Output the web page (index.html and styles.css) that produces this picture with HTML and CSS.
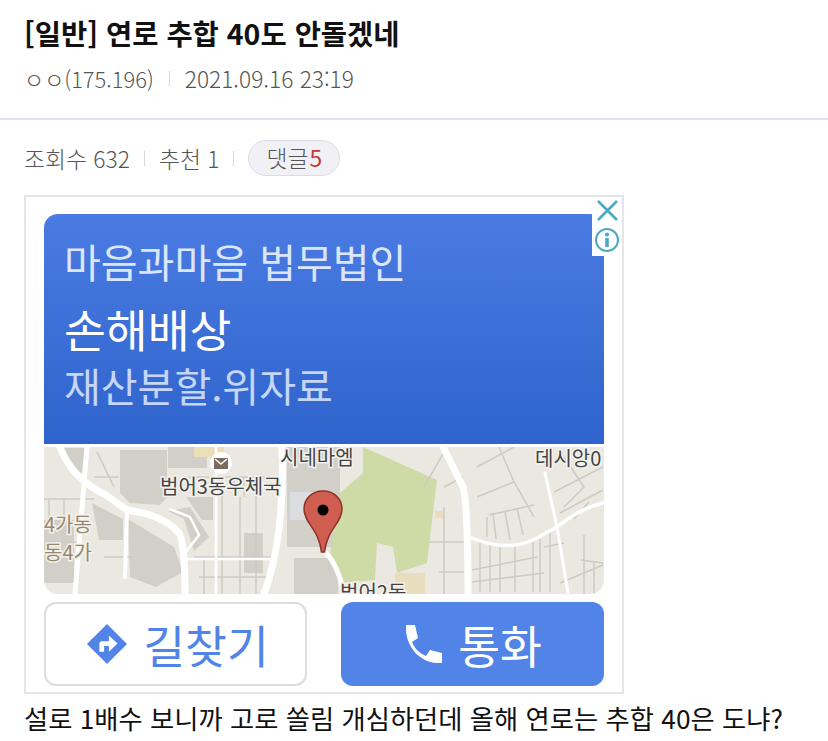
FILE: index.html
```html
<!DOCTYPE html>
<html lang="ko">
<head>
    <meta charset="UTF-8">
    <title>연로 추합 40도 안돌겠네</title>
    <link rel="stylesheet" href="styles.css">
</head>
<body>
    <header class="post-head">
        <h1>[일반] 연로 추합 40도 안돌겠네</h1>
        <div class="writer">
            <span class="writer-name">ㅇㅇ(175.196)</span>
            <i class="sep"></i>
            <span>2021.09.16 23:19</span>
        </div>
    </header>

    <div class="post-stats">
        <span>조회수 632</span>
        <i class="sep"></i>
        <span>추천 1</span>
        <i class="sep"></i>
        <span class="reply-pill">댓글<b>5</b></span>
    </div>

    <!-- Ad box -->
    <div class="ad">
        <div class="ad-badge">
            <svg width="26" height="26" viewBox="0 0 26 26">
                <path d="M4 3 L23 22 M23 3 L4 22" stroke="#4ea8c4" stroke-width="2.6" fill="none"/>
            </svg>
            <svg width="26" height="26" viewBox="0 0 26 26">
                <circle cx="13" cy="13" r="11" stroke="#4ea8c4" stroke-width="2" fill="none"/>
                <circle cx="13" cy="7.6" r="2.1" fill="#4ea8c4"/>
                <rect x="11.2" y="11" width="3.6" height="9" fill="#4ea8c4"/>
            </svg>
        </div>
        <div class="ad-copy">
            <p class="copy-name">마음과마음 법무법인</p>
            <p class="copy-main">손해배상</p>
            <p class="copy-sub">재산분할.위자료</p>
        </div>
        <div class="ad-map">
            <svg width="560" height="147" viewBox="0 0 560 147">
                <g class="map-base">
                    <rect width="560" height="147" fill="#ebe8e2"/>
                    <!-- blocks -->
                    <g fill="#d2cfc8">
                        <path d="M19 1 H41 L38 26 L26 20 Z"/>
                        <path d="M76 3 H123 V50 L116 58 L86 56 L76 46 Z"/>
                        <path d="M124 0 H163 V21 H124 Z"/>
                        <path d="M48 56 L79 72 V93 H55 Z"/>
                        <path d="M124 64 L146 60 L165 90 L150 104 L140 72 Z"/>
                        <path d="M142 50 H169 V73 H158 Z"/>
                        <path d="M84 72 L130 100 L139 125 L112 140 L86 130 Z"/>
                        <path d="M0 73 H30 V136 H0 Z"/>
                        <path d="M200 86 H219 V126 H200 Z"/>
                        <path d="M243 0 H296 V100 H243 Z"/>
                        <path d="M250 111 H294 V147 H250 Z"/>
                    </g>
                    <rect x="246" y="45" width="30" height="28" fill="#dcdde0"/>
                    <rect x="150" y="0" width="30" height="10" fill="#eadfb8"/>
                    <!-- park -->
                    <path d="M319 0 L393 33 L389 66 L383 116 L353 126 L349 100 L333 96 L331 133 L296 136 L286 106 L296 46 L319 26 Z" fill="#cfdba6"/>
                    <rect x="351" y="126" width="30" height="21" fill="#e8ddbd"/>
                    <rect x="391" y="64" width="8" height="7" fill="#e8ddbd"/>
                    <!-- small streets -->
                    <g stroke="#cdcac3" stroke-width="1.5" fill="none">
                        <path d="M0 52 H50 M0 95 H35 M5 52 V73 M20 52 V73 M60 110 H90 M53 5 L70 40 M50 30 H75"/>
                        <path d="M145 30 H232 M178 30 V147 M196 50 V147 M212 30 V147 M190 30 V50 M200 30 V50 M150 110 H232 M155 130 H230 M160 112 V147"/>
                        <path d="M433 50 L470 35 L490 70 M433 20 L470 0 M470 35 L455 0 M443 70 V90 M449 66 L452 92 M461 65 L466 93 M473 61 L479 88 M445 68 L490 58"/>
                        <path d="M436 96 V145 M446 98 V145 M456 100 V145 M471 100 V145 M489 94 V145 M496 92 V145 M506 84 V145"/>
                        <path d="M428 123 L493 110 M428 135 L500 126 M500 100 L520 96"/>
                        <path d="M516 66 L559 43 M510 45 L559 20 M516 136 L559 118 M537 113 L559 116 M540 88 V147 M550 115 V147 M520 10 L540 40 L520 60 M530 72 L545 55"/>
                        <path d="M400 40 L419 30 M400 60 V147 M385 95 H420 M395 125 H420 M400 5 L380 40"/>
                    </g>
                    <!-- roads -->
                    <g stroke="#fff" fill="none" stroke-linecap="round">
                        <path d="M16 0 Q28 32 62 48 L83 63 Q120 68 135 86 Q141 96 141 147" stroke-width="7"/>
                        <path d="M43 0 L31 147" stroke-width="5"/>
                        <path d="M83 63 L81 130" stroke-width="4"/>
                        <path d="M126 62 L146 70 L155 88 L141 106 M141 112 H232" stroke-width="2.5"/>
                        <path d="M172 0 V147" stroke-width="2.5"/>
                        <path d="M238 0 Q241 90 220 147" stroke-width="7"/>
                        <path d="M282 106 Q294 118 300 147" stroke-width="5"/>
                        <path d="M399 0 L419 40 Q424 60 424 147" stroke-width="7"/>
                        <path d="M428 91 Q463 105 489 93 L513 80 Q535 62 559 56" stroke-width="3.5"/>
                        <path d="M501 26 L513 80 L524 146" stroke-width="3"/>
                    </g>
                </g>
                <!-- post office marker -->
                <circle cx="177" cy="16" r="11" fill="#fff"/>
                <rect x="170" y="11" width="14" height="11" fill="#7f6a5e"/>
                <path d="M171 12 L177 17 L183 12" stroke="#fff" stroke-width="1.5" fill="none"/>
                <!-- labels -->
                <g class="map-label">
                    <text x="236" y="18">시네마엠</text>
                    <text x="116" y="47">범어3동우체국</text>
                    <text x="491" y="19">데시앙0</text>
                    <text x="296" y="153">범어2동</text>
                </g>
                <g class="map-label tan">
                    <text x="0" y="85">4가동</text>
                    <text x="0" y="113">동4가</text>
                </g>
                <!-- pin -->
                <path d="M279 44 C291 44 298 53 298 62 C298 76 283 82 280.500 105 H277.500 C275 82 260 76 260 62 C260 53 267 44 279 44 Z" fill="#cf5e50" stroke="#8c3329" stroke-width="1.5"/>
                <circle cx="279" cy="63" r="5.5" fill="#000"/>
            </svg>
        </div>
        <div class="ad-buttons">
            <a class="ad-btn outline">
                <svg width="42" height="42" viewBox="0 0 44 44">
                    <path d="M22 1 L43 22 L22 43 L1 22 Z" fill="#5284e8"/>
                    <path d="M14 30 V22 Q14 19 17 19 H24 V13 L33 21.5 L24 30 V24 H19 V30 Z" fill="#fff"/>
                </svg>
                길찾기
            </a>
            <a class="ad-btn solid">
                <svg width="40" height="40" viewBox="0 0 40 40">
                    <path d="M3 1 H12 L15 14 L9 18 C12 25 16 29 23 32 L27 26 L39 29 V39 H34 C17 38 4 24 3 6 Z" fill="#fff"/>
                </svg>
                통화
            </a>
        </div>
    </div>

    <p class="post-body">설로 1배수 보니까 고로 쏠림 개심하던데 올해 연로는 추합 40은 도냐?</p>
</body>
</html>
```

FILE: styles.css
```css
:root {
    --line-color: #e4e4ea;
    --grey-text: #555555;
    --ad-blue: #5284e8;
}

html {
    overflow: hidden;
}

body {
    margin: 0;
    background-color: #ffffff;
    color: #111111;
    font-family: "Noto Sans CJK KR", "Noto Sans", sans-serif;
}

.sep {
    display: inline-block;
    width: 1px;
    height: 15px;
    background-color: #d8d8d8;
}

.post-head {
    height: 120px;
    box-sizing: border-box;
    padding: 12px 24px 0;
    border-bottom: 2px solid #e2e2f0;
}

h1 {
    margin: 0;
    font-size: 28.500px;
    line-height: 42px;
    font-weight: 700;
    color: #111111;
}

.writer {
    display: flex;
    align-items: center;
    gap: 15px;
    margin-top: 3px;
    height: 42px;
    font-size: 22.700px;
    color: var(--grey-text);
    font-weight: 300;
}

.writer-name {
    font-size: 21.900px;
}

.post-stats {
    display: flex;
    align-items: center;
    gap: 14px;
    height: 38px;
    margin-top: 19px;
    padding: 0 24px;
    font-size: 22.800px;
    font-weight: 300;
    color: var(--grey-text);
}

.reply-pill {
    padding: 0 17px;
    line-height: 34px;
    height: 36px;
    box-sizing: border-box;
    border: 1px solid #dcdce4;
    border-radius: 18px;
    background-color: #f1f1f5;
}

.reply-pill b {
    margin-left: 1px;
    font-weight: 400;
    color: #c03a3a;
}

.ad {
    position: relative;
    width: 600px;
    height: 499px;
    box-sizing: border-box;
    margin: 18px 0 0 24px;
    padding: 17px 18px 0;
    border: 2px solid var(--line-color);
}

.ad-badge {
    position: absolute;
    top: 0;
    right: 0;
    width: 30px;
    height: 59px;
    display: flex;
    flex-direction: column;
    align-items: center;
    gap: 3px;
    padding-top: 1px;
    box-sizing: border-box;
    background-color: #ffffff;
}

.ad-copy {
    height: 230px;
    box-sizing: border-box;
    padding: 20px 20px 0;
    border-radius: 14px 14px 0 0;
    background: linear-gradient(#4a7be2, #2f64cc);
    color: #ffffff;
}

.ad-copy p {
    margin: 0;
    font-weight: 400;
}

.copy-name {
    font-size: 40px;
    line-height: 54px;
    color: #dbe6fb;
}

.copy-main {
    margin-top: 10px !important;
    font-size: 45.500px;
    line-height: 60px;
}

.copy-sub {
    font-size: 40px;
    line-height: 54px;
    color: #c5d6f6;
}

.ad-map {
    height: 147px;
    margin-top: 3px;
    border-radius: 0 0 14px 14px;
    overflow: hidden;
}

.ad-map svg {
    display: block;
}

.map-base {
    filter: blur(0.5px);
}

.map-label text {
    font-family: "Noto Sans CJK KR", sans-serif;
    font-size: 20px;
    fill: #444444;
    stroke: #f4f2ee;
    stroke-width: 3px;
    paint-order: stroke;
}

.map-label.tan text {
    fill: #97876e;
}

.ad-buttons {
    display: flex;
    justify-content: space-between;
    margin-top: 8px;
}

.ad-btn {
    display: flex;
    align-items: center;
    justify-content: center;
    gap: 15px;
    height: 84px;
    box-sizing: border-box;
    border-radius: 12px;
    font-size: 45.500px;
}

.ad-btn.outline {
    width: 263px;
    padding-left: 4px;
    border: 2px solid #dddddd;
    color: var(--ad-blue);
}

.ad-btn.solid {
    width: 263px;
    background-color: var(--ad-blue);
    color: #ffffff;
}

.post-body {
    margin: 6px 0 0;
    padding: 0 24px;
    font-size: 26.300px;
    line-height: 36px;
    white-space: nowrap;
    color: #111111;
}
```
